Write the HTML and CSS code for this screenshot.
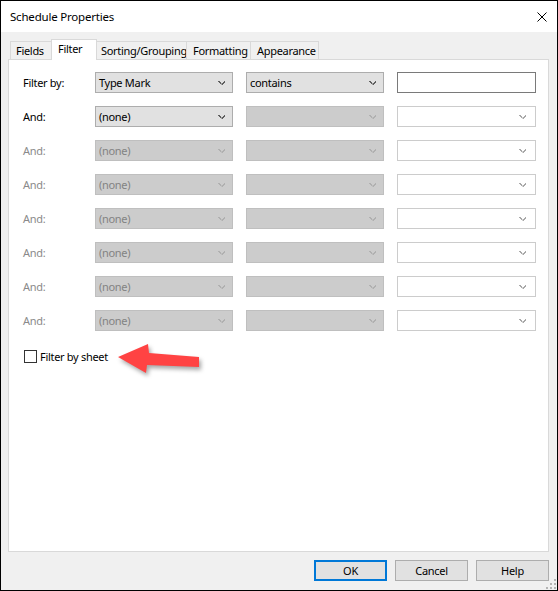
FILE: index.html
```html
<!DOCTYPE html>
<html>
<head>
<meta charset="utf-8">
<link rel="stylesheet" href="styles.css">
</head>
<body>
<div class="window">
  <div class="titlebar">
    <span class="title">Schedule Properties</span>
    <svg class="close" width="10" height="10" viewBox="0 0 10 10"><path d="M0.5 0.5 L9.5 9.5 M9.5 0.5 L0.5 9.5" stroke="#000" stroke-width="1" fill="none"/></svg>
  </div>
  <div class="client">
    <div class="tabs">
      <div class="tab tab-fields">Fields</div>
      <div class="tab tab-filter active">Filter</div>
      <div class="tab tab-sorting">Sorting/Grouping</div>
      <div class="tab tab-formatting">Formatting</div>
      <div class="tab tab-appearance">Appearance</div>
    </div>
    <div class="panel">
      <div class="rows">
        <div class="row">
          <span class="label">Filter by:</span>
          <div class="combo"><span>Type Mark</span><i class="chev"></i></div>
          <div class="combo"><span>contains</span><i class="chev"></i></div>
          <div class="textbox"></div>
        </div>
        <div class="row">
          <span class="label">And:</span>
          <div class="combo"><span>(none)</span><i class="chev"></i></div>
          <div class="combo disabled"><span></span><i class="chev"></i></div>
          <div class="combo blank"><span></span><i class="chev"></i></div>
        </div>
        <div class="row">
          <span class="label off">And:</span>
          <div class="combo disabled"><span>(none)</span><i class="chev"></i></div>
          <div class="combo disabled"><span></span><i class="chev"></i></div>
          <div class="combo blank"><span></span><i class="chev"></i></div>
        </div>
        <div class="row">
          <span class="label off">And:</span>
          <div class="combo disabled"><span>(none)</span><i class="chev"></i></div>
          <div class="combo disabled"><span></span><i class="chev"></i></div>
          <div class="combo blank"><span></span><i class="chev"></i></div>
        </div>
        <div class="row">
          <span class="label off">And:</span>
          <div class="combo disabled"><span>(none)</span><i class="chev"></i></div>
          <div class="combo disabled"><span></span><i class="chev"></i></div>
          <div class="combo blank"><span></span><i class="chev"></i></div>
        </div>
        <div class="row">
          <span class="label off">And:</span>
          <div class="combo disabled"><span>(none)</span><i class="chev"></i></div>
          <div class="combo disabled"><span></span><i class="chev"></i></div>
          <div class="combo blank"><span></span><i class="chev"></i></div>
        </div>
        <div class="row">
          <span class="label off">And:</span>
          <div class="combo disabled"><span>(none)</span><i class="chev"></i></div>
          <div class="combo disabled"><span></span><i class="chev"></i></div>
          <div class="combo blank"><span></span><i class="chev"></i></div>
        </div>
        <div class="row">
          <span class="label off">And:</span>
          <div class="combo disabled"><span>(none)</span><i class="chev"></i></div>
          <div class="combo disabled"><span></span><i class="chev"></i></div>
          <div class="combo blank"><span></span><i class="chev"></i></div>
        </div>
      </div>
      <label class="check">
        <span class="box"></span>
        <span>Filter by sheet</span>
      </label>
    </div>
    <div class="buttons">
      <div class="btn default">OK</div>
      <div class="btn">Cancel</div>
      <div class="btn">Help</div>
    </div>
  </div>
  <svg class="arrow" width="100" height="50" viewBox="0 0 100 50">
    <polygon points="8,22 38,9 39,18 89,22 89,32 37,30 36,38" fill="#ff4343"/>
  </svg>
  <svg class="grip" width="12" height="12" viewBox="0 0 12 12">
    <g fill="#b4b4b4">
      <rect x="9" y="1" width="2" height="2"/>
      <rect x="9" y="5" width="2" height="2"/>
      <rect x="5" y="5" width="2" height="2"/>
      <rect x="9" y="9" width="2" height="2"/>
      <rect x="5" y="9" width="2" height="2"/>
      <rect x="1" y="9" width="2" height="2"/>
    </g>
  </svg>
</div>
</body>
</html>
```

FILE: styles.css
```css
* { box-sizing: border-box; }
html, body { margin: 0; padding: 0; }
body {
  font-family: "Noto Sans", "Liberation Sans", sans-serif;
  font-size: 11px;
  letter-spacing: -0.3px;
  color: #000;
  background: #fff;
}
.window {
  position: relative;
  width: 558px;
  height: 591px;
  border: 1px solid #000;
  background: #f0f0f0;
  display: flex;
  flex-direction: column;
  overflow: hidden;
}
.titlebar {
  height: 31px;
  background: #fff;
  display: flex;
  align-items: center;
  justify-content: space-between;
  padding: 0 10px 0 9px;
  flex: none;
}
.title { font-size: 11.5px; letter-spacing: -0.2px; }
.close { display: block; margin-top: 1px; }

.client {
  flex: 1;
  display: flex;
  flex-direction: column;
}
.tabs {
  display: flex;
  align-items: flex-end;
  height: 21px;
  margin-top: 7px;
  margin-bottom: -1px;
  padding-left: 9px;
  position: relative;
  z-index: 1;
}
.tab {
  height: 18px;
  margin-bottom: 1px;
  border: 1px solid #d9d9d9;
  border-bottom: none;
  background: #f0f0f0;
  padding: 0 0 0 5px;
  display: flex;
  align-items: center;
  white-space: nowrap;
}
.tab + .tab { margin-left: -1px; }
.tab.active {
  height: 21px;
  margin-bottom: 0;
  background: #fff;
  padding-bottom: 3px;
  position: relative;
  z-index: 2;
}
.tab-fields { width: 42px; }
.tab-filter { width: 46px; padding-left: 6px; }
.tab-sorting { width: 91px; padding-left: 4px; }
.tab-formatting { width: 65px; padding-left: 6px; }
.tab-appearance { width: 69px; padding-left: 6px; }

.panel {
  margin: 0 8px 0 7px;
  height: 493px;
  border: 1px solid #d9d9d9;
  background: #fff;
  padding: 12px 0 0 14px;
  flex: none;
}
.rows {
  display: flex;
  flex-direction: column;
  gap: 13px;
}
.row {
  display: flex;
  align-items: center;
  height: 21px;
}
.label {
  width: 72px;
  flex: none;
}
.label.off { color: #8a8a8a; }
.combo, .textbox {
  width: 138px;
  height: 21px;
  flex: none;
  margin-right: 13px;
  display: flex;
  align-items: center;
  justify-content: space-between;
  padding: 0 6px 0 3px;
  border: 1px solid #adadad;
  background: #e1e1e1;
}
.combo span { white-space: nowrap; }
.chev {
  width: 7px;
  height: 4px;
  display: block;
  background:
    linear-gradient(to top right, transparent 45%, #5f5f5f 45%, #5f5f5f 70%, transparent 70%) left / 50% 100% no-repeat,
    linear-gradient(to top left, transparent 45%, #5f5f5f 45%, #5f5f5f 70%, transparent 70%) right / 50% 100% no-repeat;
  margin-right: 1px;
}
.combo.disabled {
  background: #cccccc;
  border-color: #bfbfbf;
  color: #838383;
}
.combo.disabled .chev {
  background:
    linear-gradient(to top right, transparent 45%, #b0b0b0 45%, #b0b0b0 70%, transparent 70%) left / 50% 100% no-repeat,
    linear-gradient(to top left, transparent 45%, #b0b0b0 45%, #b0b0b0 70%, transparent 70%) right / 50% 100% no-repeat;
}
.combo.blank {
  width: 139px;
  background: #fff;
  border-color: #cccccc;
  padding-right: 8px;
}
.combo.blank .chev {
  background:
    linear-gradient(to top right, transparent 45%, #a8a8a8 45%, #a8a8a8 70%, transparent 70%) left / 50% 100% no-repeat,
    linear-gradient(to top left, transparent 45%, #a8a8a8 45%, #a8a8a8 70%, transparent 70%) right / 50% 100% no-repeat;
}
.textbox {
  width: 139px;
  background: #fff;
  border-color: #7a7a7a;
}

.check {
  display: flex;
  align-items: center;
  margin-top: 19px;
  margin-left: 1px;
  height: 13px;
  gap: 3px;
}
.box {
  width: 13px;
  height: 13px;
  border: 1px solid #333;
  background: #fff;
  flex: none;
}

.buttons {
  display: flex;
  justify-content: flex-end;
  gap: 8px;
  margin: 8px 8px 0 0;
}
.btn {
  width: 73px;
  height: 21px;
  border: 1px solid #adadad;
  background: #e1e1e1;
  display: flex;
  align-items: center;
  justify-content: center;
}
.btn.default { border: 2px solid #0078d7; }

.arrow {
  position: absolute;
  left: 109px;
  top: 334px;
  filter: drop-shadow(2px 3px 2px rgba(0,0,0,0.35));
}
.grip {
  position: absolute;
  right: 0;
  bottom: 0;
}
```
